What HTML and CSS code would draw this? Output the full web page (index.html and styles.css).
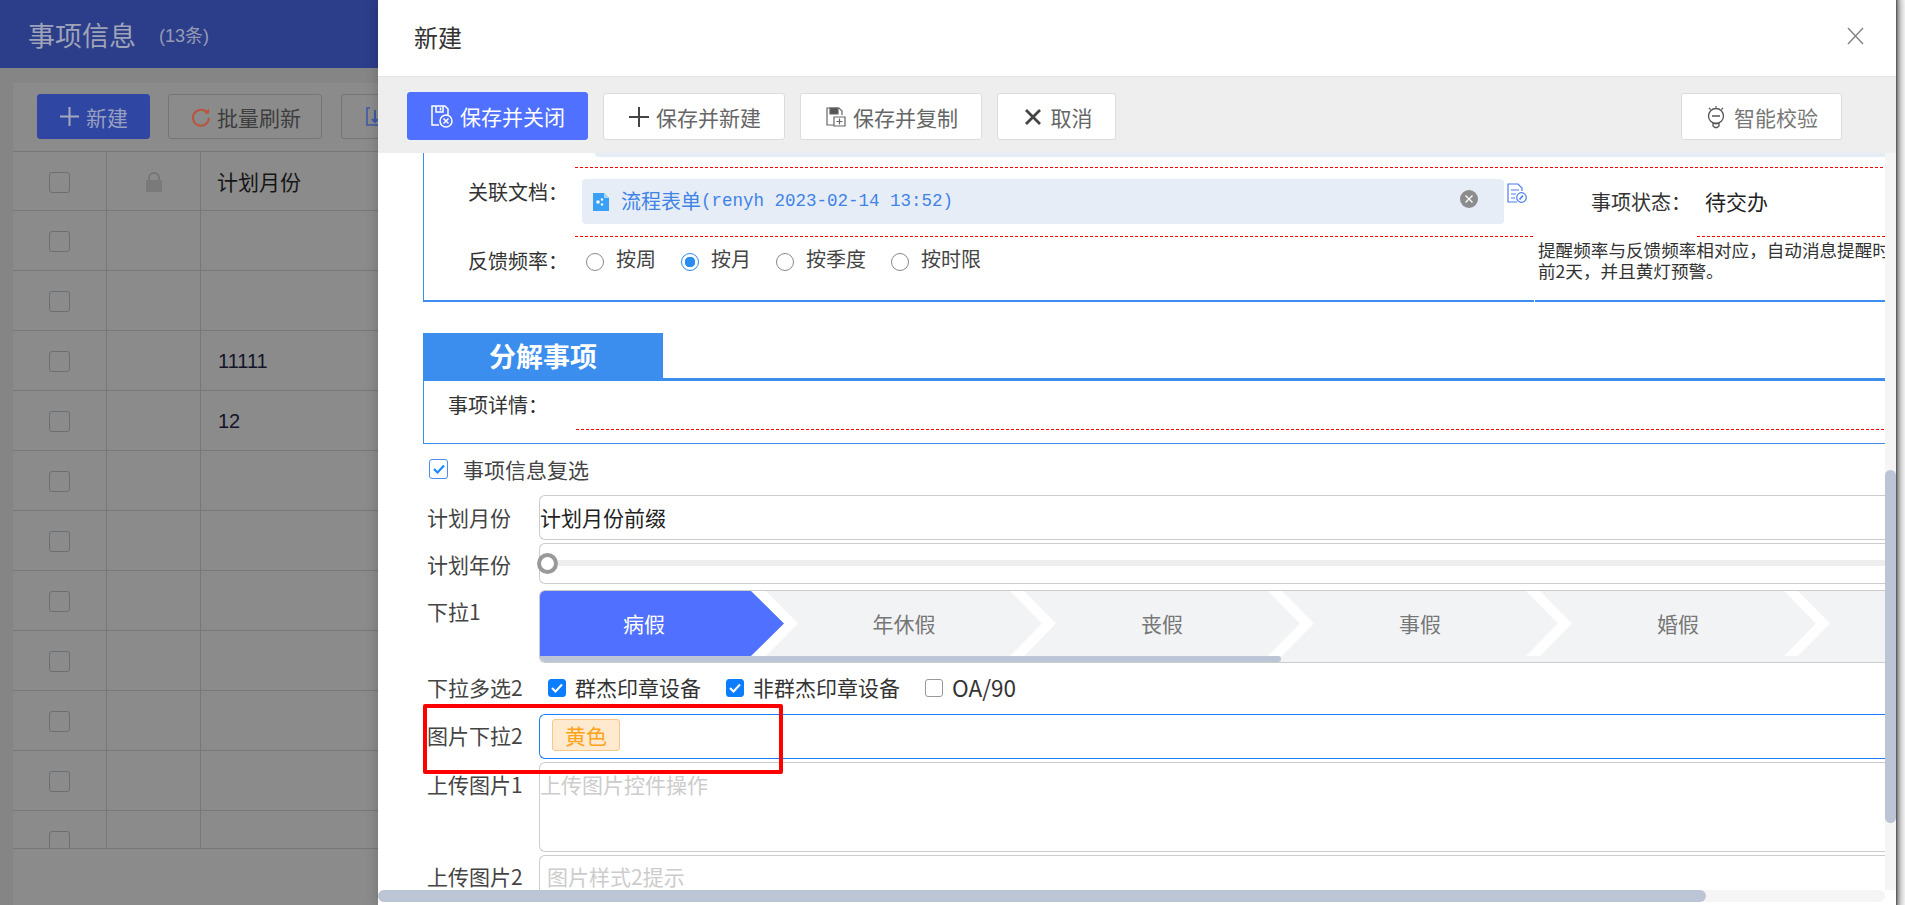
FILE: index.html
```html
<!DOCTYPE html>
<html lang="zh">

<head>
    <meta charset="UTF-8" />
    <title>事项信息</title>
    <link rel="stylesheet" href="styles.css">
</head>

<body>
    <!-- 背景页面 -->
    <div class="page">
        <div class="page-head">
            <span class="page-title">事项信息</span>
            <span class="page-count">(13条)</span>
        </div>
        <div class="page-panel">
            <div class="page-tools">
                <div class="pbtn pbtn-main">
                    <svg width="19" height="19" viewBox="0 0 19 19"><path d="M9.500 0v19M0 9.500h19" stroke="#a5a9bb" stroke-width="2"/></svg>
                    新建
                </div>
                <div class="pbtn">
                    <svg class="pbtn-icon" viewBox="0 0 20 20"><path d="M16.500 6A8 8 0 1 0 18 11" fill="none" stroke="#b8553c" stroke-width="2"/><path d="M13 6.500h5v-5z" fill="#b8553c"/></svg>
                    批量刷新
                </div>
                <div class="pbtn pbtn-cut">
                    <svg class="pbtn-icon" viewBox="0 0 20 20" fill="none" stroke="#3c5aa8" stroke-width="1.600"><path d="M4 1H1v17h19"/><path d="M9 3v12M6 12l3 3 3-3" stroke-width="2"/><path d="M13 15V3" stroke-width="2"/></svg>
                </div>
            </div>
            <div class="ptable">
                <div class="prow prow-head">
                    <div class="pcell pcell-check"><i class="pbox"></i></div>
                    <div class="pcell pcell-lock">
                        <svg width="18" height="20" viewBox="0 0 18 20"><path d="M4 9V6a5 5 0 0 1 10 0v3" fill="none" stroke="#777" stroke-width="2"/><rect x="1" y="8" width="16" height="12" rx="1" fill="#7a7a7a"/></svg>
                    </div>
                    <div class="pcell pcell-text pcell-title">计划月份</div>
                </div>
                <div class="prow"><div class="pcell pcell-check"><i class="pbox"></i></div><div class="pcell pcell-lock"></div><div class="pcell pcell-text"></div></div>
                <div class="prow"><div class="pcell pcell-check"><i class="pbox"></i></div><div class="pcell pcell-lock"></div><div class="pcell pcell-text"></div></div>
                <div class="prow"><div class="pcell pcell-check"><i class="pbox"></i></div><div class="pcell pcell-lock"></div><div class="pcell pcell-text">11111</div></div>
                <div class="prow"><div class="pcell pcell-check"><i class="pbox"></i></div><div class="pcell pcell-lock"></div><div class="pcell pcell-text">12</div></div>
                <div class="prow"><div class="pcell pcell-check"><i class="pbox"></i></div><div class="pcell pcell-lock"></div><div class="pcell pcell-text"></div></div>
                <div class="prow"><div class="pcell pcell-check"><i class="pbox"></i></div><div class="pcell pcell-lock"></div><div class="pcell pcell-text"></div></div>
                <div class="prow"><div class="pcell pcell-check"><i class="pbox"></i></div><div class="pcell pcell-lock"></div><div class="pcell pcell-text"></div></div>
                <div class="prow"><div class="pcell pcell-check"><i class="pbox"></i></div><div class="pcell pcell-lock"></div><div class="pcell pcell-text"></div></div>
                <div class="prow"><div class="pcell pcell-check"><i class="pbox"></i></div><div class="pcell pcell-lock"></div><div class="pcell pcell-text"></div></div>
                <div class="prow"><div class="pcell pcell-check"><i class="pbox"></i></div><div class="pcell pcell-lock"></div><div class="pcell pcell-text"></div></div>
                <div class="prow prow-last"><div class="pcell pcell-check"><i class="pbox"></i></div><div class="pcell pcell-lock"></div><div class="pcell pcell-text"></div></div>
            </div>
        </div>
    </div>

    <!-- 新建弹窗 -->
    <div class="modal">
        <div class="modal-head">
            <span class="modal-title">新建</span>
            <svg class="modal-close" width="17" height="18" viewBox="0 0 17 18"><path d="M1 1l15 16M16 1L1 17" stroke="#888" stroke-width="1.600"/></svg>
        </div>
        <div class="modal-tools">
            <div class="btn btn-primary">
                <svg class="btn-icon" width="23" height="24" viewBox="0 0 23 24" fill="none" stroke="#fff" stroke-width="1.500"><path d="M9 21H2V2h13l3 3v6"/><path d="M6 2v6h7V2M10.500 3.500v3"/><circle cx="16" cy="17" r="6"/><path d="M13.500 14.500l5 5M18.500 14.500l-5 5"/></svg>
                保存并关闭
            </div>
            <div class="btn btn-new">
                <svg class="btn-icon" width="20" height="20" viewBox="0 0 20 20"><path d="M10 0v20M0 10h20" stroke="#444" stroke-width="2"/></svg>
                保存并新建
            </div>
            <div class="btn btn-copy">
                <svg class="btn-icon" width="20" height="20" viewBox="0 0 20 20" fill="none" stroke="#666" stroke-width="1.200"><path d="M8 18H1V1h12l3 3v4"/><path d="M4 1h8v6H4z" fill="#555"/><path d="M8 10h11v9H8zM13.500 11.500v6M10.500 14.500h6"/></svg>
                保存并复制
            </div>
            <div class="btn btn-cancel">
                <svg class="btn-icon" width="18" height="18" viewBox="0 0 18 18"><path d="M2 2l14 14M16 2L2 16" stroke="#444" stroke-width="2.800"/></svg>
                取消
            </div>
            <div class="btn btn-check">
                <svg class="btn-icon" width="18" height="24" viewBox="0 0 18 24" fill="none" stroke="#555" stroke-width="1.300"><circle cx="9" cy="11" r="7.500"/><path d="M5 11h8M6 18.500h6v2.500l-2 1.500H8l-2-1.500zM9 1v1.500M2 3l1.500 1.500M16 3l-1.500 1.500"/></svg>
                智能校验
            </div>
        </div>

        <div class="modal-main">
            <div class="modal-body">
                <div class="prev-wrap"><div class="prev-end"></div></div>
                <div class="sec">
                    <div class="sec-left">
                        <div class="dash dash-left"></div>
                        <div class="doc-row">
                            <span class="lab lab-doc">关联文档：</span>
                            <div class="doc">
                                <svg class="doc-icon" width="18" height="18" viewBox="0 0 18 18"><path d="M1 0h11l5 5v13H1z" fill="#3aa0f5"/><path d="M12 0l5 5h-5z" fill="#a8d5fa"/><circle cx="6" cy="9" r="1.800" fill="#fff"/><circle cx="10" cy="6.500" r="1.200" fill="#fff"/><circle cx="10" cy="11.500" r="1.200" fill="#fff"/></svg>
                                <span class="doc-name">流程表单</span><span class="doc-meta">(renyh 2023-02-14 13:52)</span>
                                <svg class="doc-clear" width="18" height="18" viewBox="0 0 18 18"><circle cx="9" cy="9" r="9" fill="#8c8c8c"/><path d="M5.500 5.500l7 7M12.500 5.500l-7 7" stroke="#fff" stroke-width="1.300"/></svg>
                            </div>
                            <svg class="doc-edit" width="20" height="20" viewBox="0 0 20 20" fill="none" stroke="#4a7df0" stroke-width="1.200"><path d="M10 19H1V1h10l4 4v3"/><path d="M4 7h8M4 11h5M4 15h4"/><circle cx="14.500" cy="14.500" r="4.800"/><path d="M12.500 16.500l3.500-4" stroke-width="1.600"/></svg>
                        </div>
                        <div class="dash dash-left"></div>
                        <div class="freq-row">
                            <span class="lab">反馈频率：</span>
                            <label class="radio"><i class="radio-dot"></i>按周</label>
                            <label class="radio"><i class="radio-dot radio-on"></i>按月</label>
                            <label class="radio"><i class="radio-dot"></i>按季度</label>
                            <label class="radio"><i class="radio-dot"></i>按时限</label>
                        </div>
                    </div>
                    <div class="sec-right">
                        <div class="dash"></div>
                        <div class="status-row"><span class="status-lab">事项状态：</span><span class="status-val">待交办</span></div>
                        <div class="dash dash-status"></div>
                        <div class="hint">提醒频率与反馈频率相对应，自动消息提醒时<br>前2天，并且黄灯预警。</div>
                    </div>
                </div>

                <div class="tab">分解事项</div>
                <div class="detail">
                    <span class="lab">事项详情：</span>
                    <div class="dash dash-detail"></div>
                </div>

                <div class="again">
                    <i class="again-box">
                        <svg width="12" height="10" viewBox="0 0 12 10"><path d="M1 5l3.500 3.500L11 1.500" fill="none" stroke="#1a8cff" stroke-width="2.200"/></svg>
                    </i>
                    事项信息复选
                </div>

                <div class="row row-month">
                    <span class="row-lab">计划月份</span>
                    <div class="ctl ctl-month">计划月份前缀</div>
                </div>
                <div class="row row-year">
                    <span class="row-lab">计划年份</span>
                    <div class="ctl ctl-year">
                        <div class="track"></div>
                        <i class="knob"></i>
                    </div>
                </div>
                <div class="row row-steps">
                    <span class="row-lab row-lab-top">下拉1</span>
                    <div class="ctl ctl-steps">
                        <div class="steps">
                            <div class="step step-on">病假</div>
                            <div class="step">年休假</div>
                            <div class="step">丧假</div>
                            <div class="step">事假</div>
                            <div class="step">婚假</div>
                            <div class="step"></div>
                        </div>
                        <div class="steps-bar"><div class="steps-thumb"></div></div>
                    </div>
                </div>
                <div class="row row-multi">
                    <span class="row-lab">下拉多选2</span>
                    <label class="cb"><i class="cb-box cb-on"><svg width="12" height="10" viewBox="0 0 12 10"><path d="M1 5l3.500 3.500L11 1.500" fill="none" stroke="#fff" stroke-width="2"/></svg></i>群杰印章设备</label>
                    <label class="cb"><i class="cb-box cb-on"><svg width="12" height="10" viewBox="0 0 12 10"><path d="M1 5l3.500 3.500L11 1.500" fill="none" stroke="#fff" stroke-width="2"/></svg></i>非群杰印章设备</label>
                    <label class="cb"><i class="cb-box"></i><span class="cb-latin">OA/90</span></label>
                </div>
                <div class="row row-pic">
                    <span class="row-lab">图片下拉2</span>
                    <div class="ctl ctl-pic"><span class="tag">黄色</span></div>
                </div>
                <div class="row row-up1">
                    <span class="row-lab">上传图片1</span>
                    <div class="ctl ctl-up1">上传图片控件操作</div>
                </div>
                <div class="row row-up2">
                    <span class="row-lab">上传图片2</span>
                    <div class="ctl ctl-up2">图片样式2提示</div>
                </div>
            </div>
            <div class="vbar"><div class="vthumb"></div></div>
        </div>
        <div class="hbar"><div class="hthumb"></div></div>
        <!-- 截图里的红框标注 -->
        <div class="mark"></div>
    </div>
    <div class="edge"></div>
</body>

</html>
```

FILE: styles.css
```css
* {
    box-sizing: border-box;
}

html,
body {
    margin: 0;
    padding: 0;
    height: 905px;
    overflow: hidden;
}

body {
    display: flex;
    width: 1905px;
    background-color: #fff;
    color: #333;
    font-family: "Noto Sans CJK SC", "Liberation Sans", sans-serif;
}

i {
    display: block;
    font-style: normal;
}

/* 背景页面 */
.page {
    width: 378px;
    height: 905px;
    flex: none;
    overflow: hidden;
    background-color: #858585;
}

.page-head {
    display: flex;
    align-items: center;
    height: 68px;
    padding-left: 28px;
    background-color: #2c3d8a;
}

.page-title {
    font-size: 27px;
    color: #9ea3b8;
}

.page-count {
    margin-left: 23px;
    font-family: "Liberation Sans", "Noto Sans CJK SC", sans-serif;
    font-size: 18px;
    color: #959bb2;
}

.page-panel {
    width: 365px;
    height: 822px;
    margin: 15px 0 0 13px;
    background-color: #8b8b8b;
}

.page-tools {
    display: flex;
    gap: 18px;
    height: 68px;
    padding: 11px 0 0 24px;
}

.pbtn {
    display: flex;
    align-items: center;
    gap: 6px;
    flex: none;
    width: 154px;
    height: 45px;
    padding-left: 22px;
    border: 1px solid #757575;
    border-radius: 3px;
    font-size: 21px;
    color: #3d3d3d;
}

.pbtn-main {
    width: 113px;
    gap: 7px;
    border-color: #2f46a3;
    background-color: #2f46a3;
    color: #98a0c0;
}

.pbtn-icon {
    width: 20px;
    height: 20px;
}

.pbtn-cut {
    margin-left: 1px;
    padding-left: 24px;
}

.ptable {
    height: 698px;
    overflow: hidden;
    border-top: 1px solid #777;
    border-bottom: 1px solid #777;
}

.prow {
    display: flex;
    height: 60px;
    border-bottom: 1px solid #787878;
}

.prow-head {
    height: 59px;
}

.pcell {
    display: flex;
    align-items: center;
    height: 100%;
    padding-top: 2px;
    border-right: 1px solid #787878;
}

.pcell-check {
    justify-content: center;
    width: 94px;
}

.pcell-lock {
    justify-content: center;
    width: 94px;
}

.pcell-text {
    flex: 1;
    padding-left: 17px;
    border-right: none;
    font-family: "Liberation Sans", sans-serif;
    font-size: 20px;
    color: #14142a;
}

.pcell-title {
    padding-top: 0;
    padding-left: 16px;
    font-family: "Noto Sans CJK SC", sans-serif;
    font-size: 21px;
    color: #161616;
}

.pbox {
    width: 21px;
    height: 21px;
    border: 1px solid #6b6f75;
    border-radius: 3px;
}

/* 弹窗 */
.modal {
    position: relative;
    display: flex;
    flex-direction: column;
    width: 1518px;
    height: 905px;
    flex: none;
    overflow: hidden;
    background-color: #fff;
    box-shadow: 0 0 12px rgba(0, 0, 0, .2);
}

.modal-head {
    display: flex;
    align-items: center;
    justify-content: space-between;
    height: 77px;
    padding: 0 32px 4px 36px;
    border-bottom: 1px solid #e4e4e4;
}

.modal-title {
    font-size: 24px;
    color: #333;
}

.modal-tools {
    display: flex;
    gap: 15px;
    height: 76px;
    padding: 16px 0 0 29px;
    background-color: #eee;
}

.btn {
    display: flex;
    align-items: center;
    justify-content: center;
    gap: 7px;
    height: 47px;
    border: 1px solid #dcdcdc;
    border-radius: 3px;
    background-color: #fff;
    font-size: 21px;
    color: #666;
}

.btn-icon {
    flex: none;
}

.btn-primary {
    width: 181px;
    height: 48px;
    margin-top: -1px;
    border-color: #5070ff;
    background-color: #5070ff;
    color: #fff;
}

.btn-new,
.btn-copy {
    width: 182px;
    padding-left: 2px;
}

.btn-cancel {
    width: 119px;
    gap: 9px;
    padding-left: 3px;
}

.btn-check {
    width: 161px;
    margin-left: 550px;
    gap: 9px;
    padding-left: 2px;
    color: #777;
}

.modal-main {
    display: flex;
    height: 737px;
    overflow: hidden;
}

.modal-body {
    width: 1507px;
    flex: none;
    overflow: hidden;
}

.vbar {
    width: 11px;
    height: 737px;
    background-color: #f5f5f5;
    padding-top: 317px;
}

.vthumb {
    height: 353px;
    border-radius: 6px;
    background-color: #bcc5d5;
}

.hbar {
    width: 1507px;
    height: 12px;
    border-radius: 6px;
    background-color: #f5f5f5;
}

.hthumb {
    width: 1328px;
    height: 12px;
    border-radius: 6px;
    background-color: #bcc5d5;
}

.mark {
    position: absolute;
    left: 45px;
    top: 704px;
    width: 360px;
    height: 70px;
    border: 4px solid #f00;
    border-radius: 2px;
}

.edge {
    width: 9px;
    height: 905px;
    flex: none;
    background-image: linear-gradient(to right, #555, #aaa 25%, #ddd 60%, #f4f4f4);
}

/* 红色虚线 */
.dash {
    height: 1px;
    background-image: linear-gradient(to right, #f00 60%, transparent 0);
    background-size: 5px 1px;
    background-repeat: repeat-x;
}

.dash-left {
    margin-left: 151px;
}

.dash-status {
    margin-left: 162px;
}

.dash-detail {
    margin: 9px 0 0 128px;
}

/* 上半部分 */
.prev-wrap {
    height: 4px;
    margin-left: 45px;
    border-left: 1px solid #3c8eee;
}

.prev-end {
    height: 4px;
    margin-left: 171px;
    border-radius: 0 0 0 4px;
    background-color: #e6edf7;
}

.sec {
    display: flex;
    height: 145px;
    margin-left: 45px;
    border-left: 1px solid #3c8eee;
}

.sec-left {
    width: 1110px;
    flex: none;
    padding-top: 10px;
    border-bottom: 2px solid #3c8eee;
}

.sec-right {
    flex: 1;
    margin-left: 1px;
    padding-top: 10px;
    border-bottom: 2px solid #3c8eee;
    overflow: hidden;
}

.lab {
    font-size: 20px;
    color: #333;
    white-space: nowrap;
}

.doc-row {
    display: flex;
    align-items: flex-start;
    height: 68px;
    margin-left: 44px;
    padding-top: 11px;
}

.lab-doc {
    width: 114px;
    flex: none;
    line-height: 26px;
}

.doc {
    display: flex;
    align-items: center;
    width: 922px;
    height: 45px;
    flex: none;
    padding-left: 10px;
    border-radius: 4px;
    background-color: #e6edf7;
}

.doc-name {
    margin: 0 0 2px 11px;
    font-size: 20px;
    color: #3f83e6;
    white-space: nowrap;
}

.doc-meta {
    margin-bottom: 1px;
    font-family: "Liberation Mono", monospace;
    font-size: 17.500px;
    color: #3f83e6;
    white-space: nowrap;
}

.doc-clear {
    margin: 0 26px 5px auto;
}

.doc-edit {
    margin: 4px 0 0 3px;
    flex: none;
}

.freq-row {
    display: flex;
    align-items: center;
    height: 30px;
    margin: 9px 0 0 44px;
}

.freq-row .lab {
    width: 118px;
    flex: none;
    margin-top: -2px;
}

.radio {
    display: flex;
    align-items: flex-start;
    gap: 12px;
    margin: 0 25px 4px 0;
    font-size: 20px;
    line-height: 26px;
    color: #444;
}

.radio-dot {
    width: 18px;
    height: 18px;
    margin-top: 7px;
    border: 1px solid #8a8a8a;
    border-radius: 50%;
    background-color: #fff;
}

.radio-on {
    border-color: #2d8cf0;
    background-image: radial-gradient(circle, #2d8cf0 0, #2d8cf0 5px, transparent 5.500px);
}

.status-row {
    height: 68px;
    padding: 20px 0 0 56px;
    font-size: 20px;
    line-height: 26px;
    white-space: nowrap;
}

.status-val {
    margin-left: 14px;
    font-size: 21px;
    color: #222;
}

.hint {
    margin: 2px 0 0 3px;
    font-size: 17.600px;
    line-height: 21px;
    color: #333;
    white-space: nowrap;
}

/* 分解事项 */
.tab {
    width: 240px;
    height: 45px;
    margin: 31px 0 0 45px;
    background-color: #3c8eee;
    color: #fff;
    font-size: 27px;
    font-weight: 700;
    line-height: 45px;
    text-align: center;
}

.detail {
    height: 66px;
    margin-left: 45px;
    padding: 9px 0 0 24px;
    border-top: 3px solid #3c8eee;
    border-left: 1px solid #3c8eee;
    border-bottom: 1px solid #3c8eee;
}

.detail .lab {
    display: block;
    line-height: 30px;
}

.again {
    display: flex;
    align-items: center;
    gap: 15px;
    height: 22px;
    margin: 14px 0 0 51px;
    font-size: 21px;
    color: #444;
}

.again-box {
    display: flex;
    align-items: center;
    justify-content: center;
    width: 19px;
    height: 20px;
    border: 1px solid #4a8cf0;
    border-radius: 3px;
}

/* 表单行 */
.row {
    display: flex;
    margin-left: 49px;
}

.row-lab {
    width: 112px;
    flex: none;
    align-self: center;
    font-size: 21px;
    line-height: 30px;
    color: #444;
}

.row-lab-top {
    align-self: flex-start;
    margin-top: 6px;
}

.ctl {
    width: 1346px;
    flex: none;
    border: 1.500px solid #ccc;
    border-right: none;
    border-radius: 6px 0 0 6px;
    font-size: 21px;
}

.row-month {
    margin-top: 15px;
}

.row-month .row-lab {
    margin-top: -2px;
}

.ctl-month {
    height: 45px;
    line-height: 42px;
    color: #222;
}

.row-year {
    margin-top: 3px;
}

.ctl-year {
    position: relative;
    height: 41px;
    padding-top: 16px;
}

.track {
    height: 6px;
    background-color: #eee;
}

.knob {
    position: absolute;
    left: -3px;
    top: 9px;
    width: 21px;
    height: 21px;
    border: 4px solid #999;
    border-radius: 50%;
    background-color: #fff;
}

.row-steps {
    margin-top: 6px;
}

.ctl-steps {
    height: 73px;
    border-width: 1px;
    overflow: hidden;
}

.steps {
    display: flex;
    height: 65px;
}

.step {
    width: 276px;
    flex: none;
    margin-left: -18px;
    background-color: #f2f3f5;
    clip-path: polygon(0 0, 244px 0, 276px 50%, 244px 100%, 0 100%, 32px 50%);
    color: #777;
    line-height: 65px;
    text-align: center;
}

.step-on {
    width: 244px;
    margin-left: 0;
    padding-right: 36px;
    background-color: #5070ff;
    clip-path: polygon(0 0, 211px 0, 244px 50%, 211px 100%, 0 100%);
    color: #fff;
}

.steps-bar {
    height: 6px;
    background-color: #f2f3f5;
}

.steps-thumb {
    width: 741px;
    height: 6px;
    border-radius: 0 3px 3px 0;
    background-color: #bcc5d5;
}

.row-multi {
    height: 30px;
    margin-top: 9px;
    align-items: center;
}

.cb {
    display: flex;
    align-items: center;
    gap: 9px;
    margin-left: 9px;
    margin-right: 16px;
    font-size: 21px;
    color: #333;
}

.cb-latin {
    font-size: 22.500px;
}

.cb-box {
    display: flex;
    align-items: center;
    justify-content: center;
    width: 18px;
    height: 18px;
    margin-top: 2px;
    border: 1px solid #999;
    border-radius: 3px;
}

.cb-on {
    border-color: #0d7dff;
    background-color: #0d7dff;
}

.row-pic {
    margin-top: 12px;
}

.row-pic .row-lab {
    margin-top: -3px;
}

.ctl-pic {
    height: 45px;
    padding: 4px 0 0 12px;
    border-color: #1a7fff;
}

.tag {
    display: inline-block;
    width: 68px;
    height: 32px;
    border: 1px solid #f6c987;
    border-radius: 3px;
    background-color: #ffe9cf;
    color: #fca31a;
    line-height: 30px;
    text-align: center;
}

.row-up1 {
    margin-top: 3px;
}

.ctl-up1 {
    height: 90px;
    line-height: 42px;
    color: #ccc;
}

.row-up1 .row-lab {
    align-self: flex-start;
    margin-top: 7px;
}

.row-up2 {
    margin-top: 3px;
}

.ctl-up2 {
    height: 60px;
    padding-left: 7px;
    line-height: 40px;
    color: #ccc;
}

.row-up2 .row-lab {
    align-self: flex-start;
    margin-top: 6px;
}
```
